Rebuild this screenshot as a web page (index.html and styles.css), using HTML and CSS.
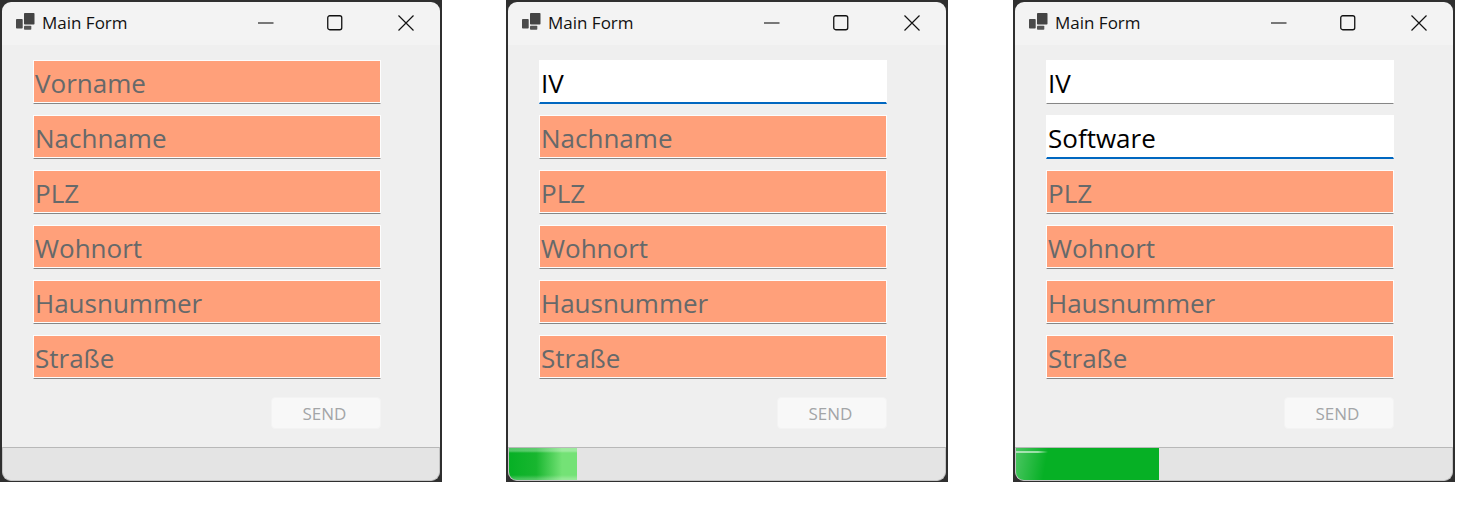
FILE: index.html
```html
<!DOCTYPE html>
<html lang="de">
<head>
<meta charset="utf-8">
<title>Main Form</title>
<link rel="stylesheet" href="styles.css">
</head>
<body>
<svg class="defs" width="0" height="0" aria-hidden="true">
  <symbol id="app" viewBox="0 0 19 17"><rect x="8" y="0" width="10.500" height="11.500" rx=".8" fill="#444"/><rect x="0" y="6" width="6.700" height="9.500" rx=".8" fill="#4a4a4a"/><rect x="8" y="12.800" width="7.300" height="4" rx=".8" fill="#555"/></symbol>
  <symbol id="min" viewBox="0 0 16 16"><path d="M0 8H15.500" stroke="#111" stroke-width="1.100" fill="none"/></symbol>
  <symbol id="max" viewBox="0 0 16 16"><rect x=".75" y=".75" width="14" height="14" rx="2" stroke="#111" stroke-width="1.300" fill="none"/></symbol>
  <symbol id="close" viewBox="0 0 16 16"><path d="M.5.500L15.500 15.500M15.500.500L.5 15.500" stroke="#111" stroke-width="1.200" fill="none"/></symbol>
</svg>

<main class="desk">
  <section class="window">
    <header class="titlebar">
      <svg class="app-icon"><use href="#app"/></svg>
      <span class="title">Main Form</span>
      <div class="controls">
        <svg class="ctl ctl-min"><use href="#min"/></svg>
        <svg class="ctl"><use href="#max"/></svg>
        <svg class="ctl"><use href="#close"/></svg>
      </div>
    </header>
    <div class="content">
      <div class="field"><span class="ph">Vorname</span></div>
      <div class="field"><span class="ph">Nachname</span></div>
      <div class="field"><span class="ph">PLZ</span></div>
      <div class="field"><span class="ph">Wohnort</span></div>
      <div class="field"><span class="ph">Hausnummer</span></div>
      <div class="field"><span class="ph">Straße</span></div>
      <div class="actions"><button class="send" type="button" disabled>SEND</button></div>
    </div>
    <footer class="status"></footer>
  </section>

  <section class="window">
    <header class="titlebar">
      <svg class="app-icon"><use href="#app"/></svg>
      <span class="title">Main Form</span>
      <div class="controls">
        <svg class="ctl ctl-min"><use href="#min"/></svg>
        <svg class="ctl"><use href="#max"/></svg>
        <svg class="ctl"><use href="#close"/></svg>
      </div>
    </header>
    <div class="content">
      <div class="field filled focused"><span class="val">IV</span></div>
      <div class="field"><span class="ph">Nachname</span></div>
      <div class="field"><span class="ph">PLZ</span></div>
      <div class="field"><span class="ph">Wohnort</span></div>
      <div class="field"><span class="ph">Hausnummer</span></div>
      <div class="field"><span class="ph">Straße</span></div>
      <div class="actions"><button class="send" type="button" disabled>SEND</button></div>
    </div>
    <footer class="status"><div class="bar bar-early" style="width:68px"></div></footer>
  </section>

  <section class="window">
    <header class="titlebar">
      <svg class="app-icon"><use href="#app"/></svg>
      <span class="title">Main Form</span>
      <div class="controls">
        <svg class="ctl ctl-min"><use href="#min"/></svg>
        <svg class="ctl"><use href="#max"/></svg>
        <svg class="ctl"><use href="#close"/></svg>
      </div>
    </header>
    <div class="content">
      <div class="field filled"><span class="val">IV</span></div>
      <div class="field filled focused"><span class="val">Software</span></div>
      <div class="field"><span class="ph">PLZ</span></div>
      <div class="field"><span class="ph">Wohnort</span></div>
      <div class="field"><span class="ph">Hausnummer</span></div>
      <div class="field"><span class="ph">Straße</span></div>
      <div class="actions"><button class="send" type="button" disabled>SEND</button></div>
    </div>
    <footer class="status"><div class="bar bar-late" style="width:143px"></div></footer>
  </section>
</main>
</body>
</html>
```
FILE: styles.css
```css
* { box-sizing: border-box; }
html, body { margin: 0; padding: 0; background: #fff; }
body { font-family: "Open Sans", "Noto Sans", "Liberation Sans", sans-serif; height: 505px; overflow: hidden; }
.defs { position: absolute; }

.desk {
  display: flex;
  gap: 64px;
  width: 1464px;
  height: 482px;
}
.window {
  width: 442px;
  height: 482px;
  flex: none;
  display: flex;
  flex-direction: column;
  padding: 2px 2px 1px 2px;
  background: #2f2f2f;
}
.window:nth-child(3) { margin-left: 1px; }

.titlebar {
  height: 43px;
  flex: none;
  display: flex;
  align-items: center;
  padding-left: 14px;
  background: #f3f3f3;
  border-radius: 9px 9px 0 0;
}
.app-icon { width: 19px; height: 17px; margin-right: 7px; margin-top: -5px; }
.title { font-size: 17px; color: #111; line-height: 20px; margin-top: -2px; }
.controls { margin-left: auto; display: flex; align-items: center; gap: 55px; padding-right: 26px; }
.ctl { width: 16px; height: 16px; display: block; margin-top: -2px; }
.ctl-min { margin-right: -2px; }

.content {
  flex: 1;
  min-height: 0;
  background: #efefef;
  padding: 15px 59px 0 31px;
  display: flex;
  flex-direction: column;
  gap: 11px;
}
.field {
  height: 44px;
  flex: none;
  display: flex;
  align-items: center;
  padding: 2px 1px 0;
  background: #ffa07a;
  border: 1px solid #fdfdfd;
  border-bottom: 1px solid #868686;
  box-shadow: inset 0 -1px 0 #fdfdfd;
  font-size: 26px;
  line-height: 40px;
}
.ph { color: #66696a; }
.val { color: #000; }
.filled { background: #fff; border-color: #fff; border-bottom-color: #868686; }
.focused { border-bottom: 2px solid #0067c0; box-shadow: none; }

.actions { display: flex; justify-content: flex-end; padding-top: 7px; }
.send {
  width: 110px;
  height: 32px;
  border: 1px solid #f3f3f3;
  border-radius: 4px;
  background: #f8f8f8;
  color: #a3a5a7;
  font: 17px "Open Sans", "Noto Sans", sans-serif;
  padding: 0 3px 0 0;
}

.status {
  height: 34px;
  flex: none;
  background: #e4e4e4;
  border: 1px solid #c4c4c4;
  border-top-color: #b8b8b8;
  border-radius: 0 0 9px 9px;
  overflow: hidden;
}
.bar { height: 100%; background: #06b025; }
.bar-early {
  background:
    linear-gradient(180deg, rgba(255,255,255,.3) 0 3px, transparent 5px, transparent 27px, rgba(255,255,255,.25) 31px),
    linear-gradient(90deg, #06b025 0, #18b62f 40%, #74e276 78%, #74e276 100%);
}
.bar-late {
  background:
    linear-gradient(90deg, rgba(255,255,255,.55) 0 22px, transparent 32px) 0 3px / 100% 2px no-repeat,
    linear-gradient(100deg, rgba(255,255,255,.28) 0, transparent 32px),
    #06b025;
}
```
